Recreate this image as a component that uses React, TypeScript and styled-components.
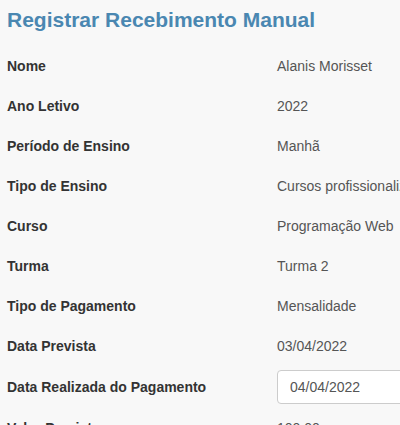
import React from "react";
import styled, { createGlobalStyle } from "styled-components";

const GlobalStyle = createGlobalStyle`
  html, body {
    margin: 0;
    padding: 0;
    background: #f8f8f8;
    overflow: hidden;
  }
  body {
    font-family: "Liberation Sans", Arial, Helvetica, sans-serif;
  }
`;

const Page = styled.div`
  width: 640px;
  padding: 8px 0 0 7px;
  box-sizing: border-box;
`;

const Title = styled.h2`
  margin: 0 0 14px 0;
  font-size: 21px;
  line-height: 24px;
  font-weight: bold;
  color: #4a87b1;
`;

const Row = styled.div<{ $compact?: boolean }>`
  display: grid;
  grid-template-columns: 270px 1fr;
  align-items: baseline;
  padding: ${(p) => (p.$compact ? "4px 0" : "10px 0")};
`;

const Label = styled.div`
  font-size: 14px;
  line-height: 20px;
  font-weight: bold;
  color: #333;
  white-space: nowrap;
`;

const Value = styled.div`
  font-size: 14px;
  line-height: 20px;
  color: #555;
  white-space: nowrap;
`;

const DateInput = styled.input`
  box-sizing: border-box;
  width: 220px;
  height: 34px;
  padding: 6px 12px;
  font-family: "Liberation Sans", Arial, Helvetica, sans-serif;
  font-size: 14px;
  line-height: 20px;
  color: #555;
  background: #fff;
  border: 1px solid #ccc;
  border-radius: 4px;
  outline: none;
`;

const rows: [string, string][] = [
  ["Nome", "Alanis Morisset"],
  ["Ano Letivo", "2022"],
  ["Período de Ensino", "Manhã"],
  ["Tipo de Ensino", "Cursos profissionalizantes"],
  ["Curso", "Programação Web"],
  ["Turma", "Turma 2"],
  ["Tipo de Pagamento", "Mensalidade"],
  ["Data Prevista", "03/04/2022"],
];

export default function App() {
  return (
    <>
      <GlobalStyle />
      <Page>
        <Title>Registrar Recebimento Manual</Title>
        {rows.map(([l, v]) => (
          <Row key={l}>
            <Label>{l}</Label>
            <Value>{v}</Value>
          </Row>
        ))}
        <Row $compact>
          <Label>Data Realizada do Pagamento</Label>
          <div>
            <DateInput type="text" defaultValue="04/04/2022" />
          </div>
        </Row>
        <Row>
          <Label>Valor Previsto</Label>
          <Value>100,00</Value>
        </Row>
      </Page>
    </>
  );
}
